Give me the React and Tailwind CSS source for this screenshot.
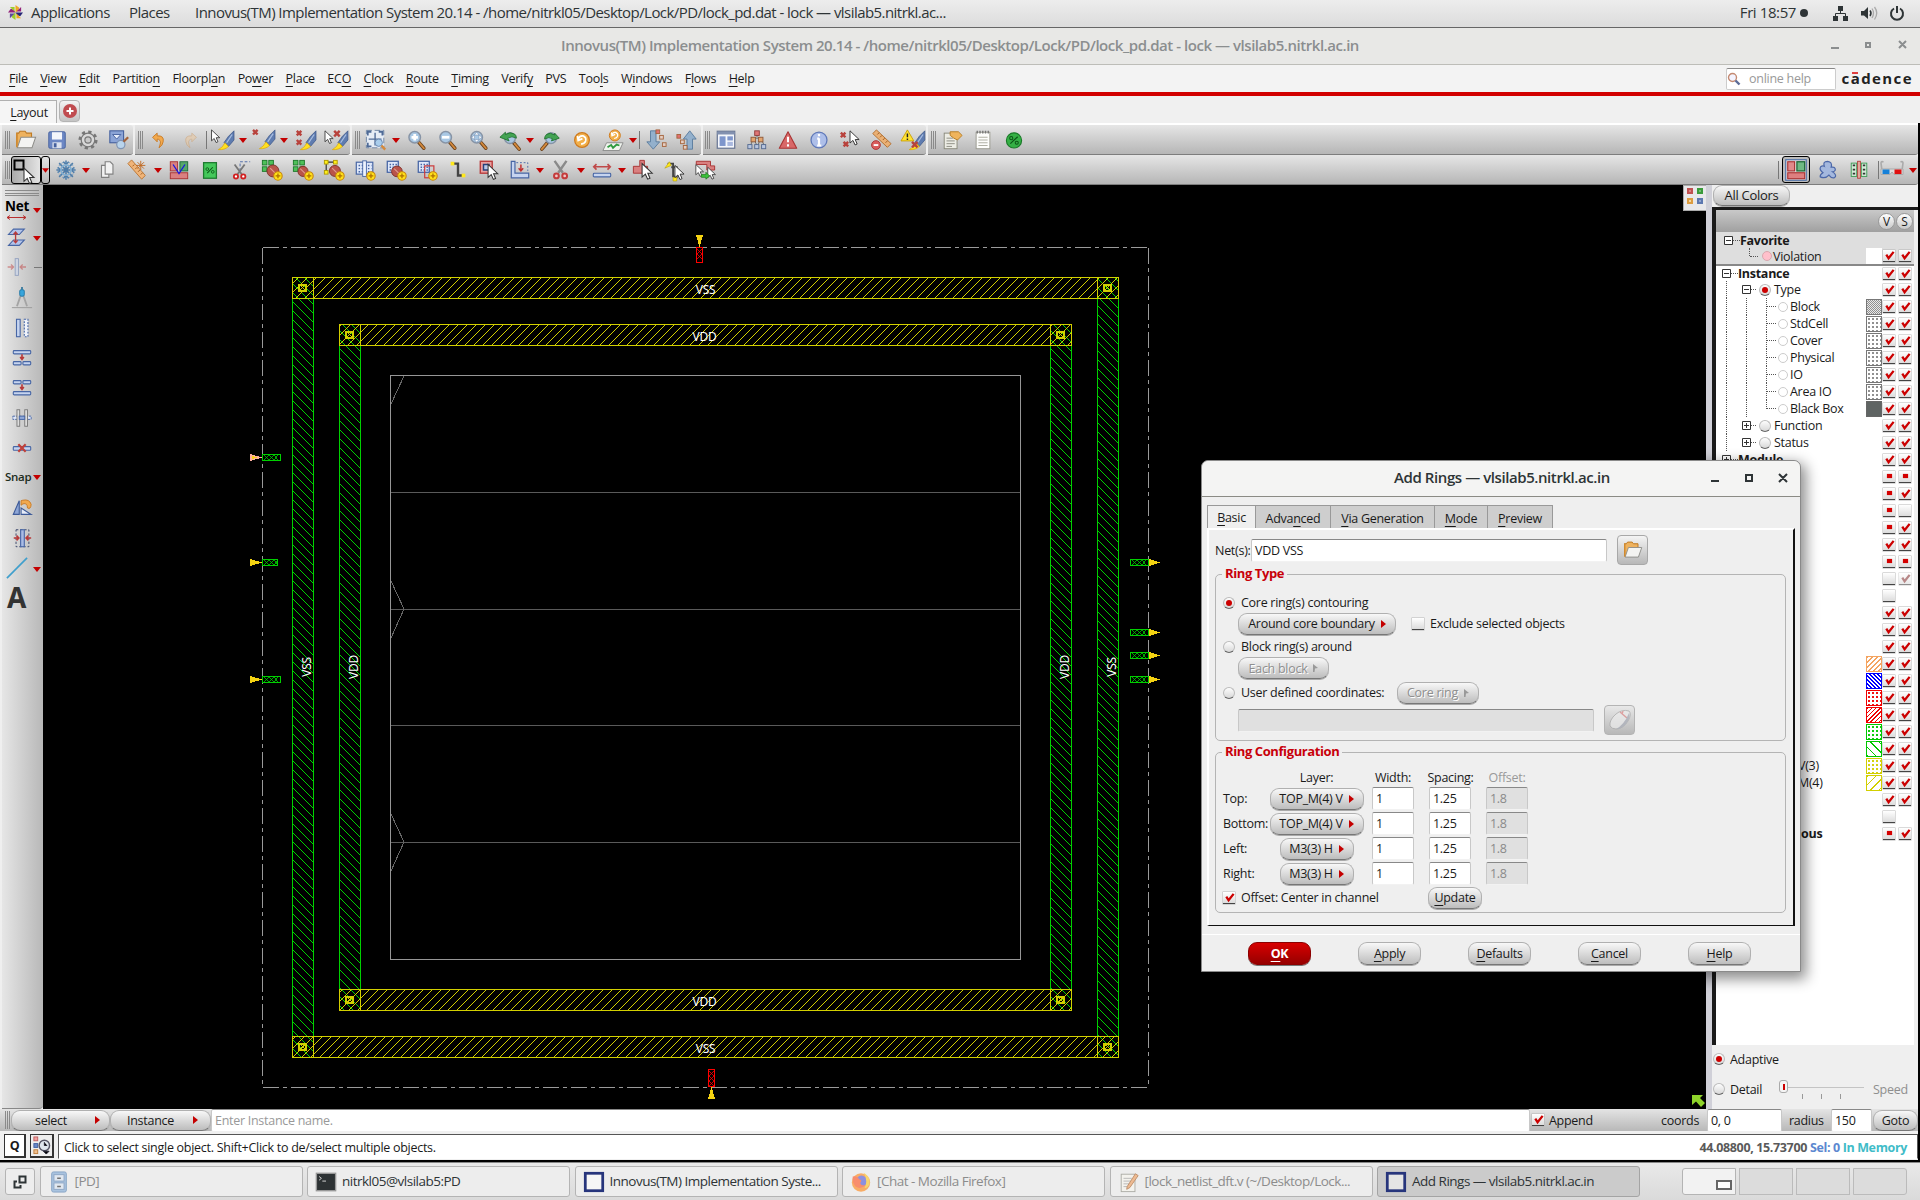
import React from "react";

/* ---------- small drawing parts ---------- */
const Cur = ({ x = 0, y = 0, s = 1 }) => (
  <path transform={`translate(${x} ${y}) scale(${s})`} d="M0 0V14L3.4 11L5.8 16.2L8.2 15.2L6 10H10.5Z" fill="#fff" stroke="#333" strokeWidth="1.1" />
);
const RX = ({ x = 0, y = 0, s = 6 }) => (
  <path d={`M${x} ${y}l${s} ${s}M${x + s} ${y}l${-s} ${s}`} stroke="#b8423c" strokeWidth="2.6" />
);
const Plus = ({ x = 17, y = 17 }) => (
  <g>
    <circle cx={x} cy={y} r="4.6" fill="#ffe11a" stroke="#c8860a" strokeWidth="1.2" />
    <path d={`M${x - 2.6} ${y}h5.2M${x} ${y - 2.6}v5.2`} stroke="#b07000" strokeWidth="1.4" />
  </g>
);
const Brush = ({ x = 0, y = 0 }) => (
  <g transform={`translate(${x} ${y})`}>
    <path d="M14 -1V9L8 16L3 12L8 5Z" fill="#5f7cb0" stroke="#3d5788" strokeWidth=".8" />
    <path d="M12 3L6 12" stroke="#a8bde0" strokeWidth="1.4" />
    <path d="M4 12L8 16Q4 20 -3 19.5Q2 17 4 12Z" fill="#ffe021" stroke="#d9a400" strokeWidth=".7" />
  </g>
);
const Lens = ({ children, x = 9.5, y = 9, r = 6.3 }) => (
  <g>
    <path d={`M${x + 4} ${y + 5}L${x + 10} ${y + 12}`} stroke="#6b431e" strokeWidth="3.8" strokeLinecap="round" />
    <path d={`M${x + 5} ${y + 6}L${x + 10} ${y + 12}`} stroke="#d58a3c" strokeWidth="2" strokeLinecap="round" />
    <circle cx={x} cy={y} r={r} fill="#a9c8e4" stroke="#8794a6" strokeWidth="1.6" />
    {children}
  </g>
);
const Ball = ({ x = 13, y = 13, r = 5.5 }) => (
  <g>
    <circle cx={x} cy={y} r={r} fill="#b9544a" stroke="#7e2f28" />
    <path d={`M${x - 3} ${y - 3}l6 6`} stroke="#e09a90" strokeWidth="1.2" />
  </g>
);
const Greens = () => (
  <g fill="#4fc05a" stroke="#1c7a2a">
    <rect x="1.5" y="1.5" width="5" height="5" /><rect x="8.5" y="1.5" width="5" height="5" />
    <rect x="1.5" y="8.5" width="5" height="5" /><rect x="8.5" y="8.5" width="5" height="5" />
  </g>
);
const BlueGrid = ({ w = 12, h = 12 }) => (
  <g>
    <rect x="2.5" y="2.5" width={w} height={h} fill="#dfe8fa" stroke="#4766a5" strokeWidth="1.4" />
    <path d={`M5 6h${w - 4}M5 9h${w - 4}M5 12h${w - 4}`} stroke="#4766a5" strokeWidth="1.6" strokeDasharray="1.6 1.6" />
  </g>
);
const Swirl = ({ x = 12, y = 12, s = 1 }) => (
  <g transform={`translate(${x} ${y}) scale(${s})`}>
    <circle r="8" fill="#f2b04a" stroke="#cf7a1c" strokeWidth="1.4" />
    <path d="M-4 -1Q-3 -5 1 -4.5Q5 -3 4 1Q3 4 -1 4.5M-5 -4.5L-4.2 .5L.5 -1.5" fill="none" stroke="#fff" strokeWidth="1.8" />
  </g>
);
const Folder = () => (
  <g>
    <path d="M2 19V4.5H4L5.5 2.5H11L12.5 4.5H18V9" fill="#eeb25e" stroke="#c07a22" strokeWidth="1.2" />
    <path d="M2.5 20.5L6.5 9H22.5L18.5 20.5Z" fill="#f4f4f2" stroke="#8c8c88" strokeWidth="1.1" />
    <path d="M2 4V20" stroke="#d08a30" strokeWidth="1.6" />
  </g>
);
const Persp = () => (
  <g>
    <rect x=".8" y=".8" width="22.4" height="22.4" fill="#e6dede" stroke="#4a6ea8" strokeWidth="1.2" />
    <rect x="3" y="3" width="7.5" height="10" fill="#e08a8a" stroke="#a83030" strokeWidth="1.2" />
    <rect x="13" y="3" width="8.5" height="10" fill="#6fb984" stroke="#1d6a38" strokeWidth="1.4" />
    <rect x="3" y="15" width="18.5" height="6.5" fill="#dd7f7f" stroke="#a83030" strokeWidth="1.2" />
  </g>
);

const icons = {
  folder: <Folder />,
  save: <g><rect x="3" y="3" width="18" height="18" rx="1.5" fill="#6c87c4" stroke="#45609e" /><rect x="6.5" y="3.5" width="11" height="8" fill="#f4f6fb" /><rect x="7" y="14.5" width="10" height="6.5" fill="#dbe1ee" /><rect x="8.5" y="15.5" width="3" height="4.5" fill="#45609e" /></g>,
  gear: <g><circle cx="12" cy="12" r="8.6" fill="none" stroke="#777" strokeWidth="3.6" strokeDasharray="3.4 3.35" /><circle cx="12" cy="12" r="7.4" fill="#d8d8d8" stroke="#777" strokeWidth="1.3" /><circle cx="12" cy="12" r="3.4" fill="#c9c9c9" stroke="#777" strokeWidth="1.3" /></g>,
  check: <g><rect x="2" y="2" width="15" height="13" fill="#8ba4d6" stroke="#45609e" strokeWidth="1.2" /><path d="M5 6h9l-4.5 5z" fill="#e7eefb" stroke="#45609e" /><circle cx="14" cy="17" r="4.5" fill="#b9d4ec" stroke="#7f94b4" strokeWidth="1.3" /><path d="M17 14L22 9" stroke="#a5633a" strokeWidth="2.4" /></g>,
  undo: <path d="M5 9L10 4.500V7.500Q18 7 16.500 14Q16 18 12 20.500Q14.500 14 13 12.500Q12 11 10 11V14Z" fill="#f1a94e" stroke="#c87a24" />,
  redo: <path opacity=".55" d="M19 9L14 4.500V7.500Q6 7 7.500 14Q8 18 12 20.500Q9.500 14 11 12.500Q12 11 14 11V14Z" fill="#ecc9a0" stroke="#cda070" />,
  brush: <g><Brush x="10" y="3" /><Cur x={-.5} y={1} s={.85} /></g>,
  brushx: <g><Brush x="10" y="2" /><RX x={0} y={1} s={5} /></g>,
  brushxx: <g><Brush x="10" y="3" /><RX x={3} y={2} s={5} /><RX x={3} y={12} s={5} /></g>,
  cursorx: <g><Brush x="11" y="3" /><Cur x={0} y={2} s={.85} /><RX x={10} y={2} s={6} /></g>,
  zoomfit: <g><rect x="1.500" y="1.500" width="19" height="19" fill="#e6edf6" stroke="#6e84a4" strokeDasharray="6 3" /><path d="M3 7V3H7M15 3H19V7M3 15V19H7" fill="none" stroke="#4e6a96" strokeWidth="2" /><path d="M11 4v14M4 11h14" stroke="#4e6a96" strokeWidth="1.500" /><circle cx="15" cy="15" r="4" fill="#a9cdec" stroke="#6888b0" /><path d="M18 18L22 22.500" stroke="#d58a3c" strokeWidth="2.600" /></g>,
  zoomin: <Lens><path d="M6 9H13M9.500 5.500V12.500" stroke="#fff" strokeWidth="3" /></Lens>,
  zoomout: <Lens><path d="M5.500 9H13.500" stroke="#fff" strokeWidth="3" /></Lens>,
  zoomall: <Lens><path d="M9.500 3.500L12 6.500H7ZM9.500 14.500L12 11.500H7ZM4 9L7 6.500V11.500ZM15 9L12 6.500V11.500Z" fill="#fff" stroke="#7890b0" strokeWidth=".6" /></Lens>,
  zoomprev: <g><Lens x={12} y={10} r={5.800} /><path d="M1 9L7 3.500V6Q12 2.500 17 5.500Q19 7 19 10Q14 7 9.500 10L11 13Z" fill="#43a352" stroke="#1d6e2c" strokeWidth=".9" /></g>,
  zoomnext: <g transform="scale(-1 1) translate(-24 0)"><Lens x={12} y={10} r={5.800} /><path d="M3 10L8 4.500V6.500Q13 3 17 6Q19 8 19 11Q14 8 10.500 10.500L11.500 13Z" fill="#43a352" stroke="#1d6e2c" strokeWidth=".9" /></g>,
  swirl: <Swirl />,
  swirldb: <g><Swirl x={14} y={7} s={.75} /><path d="M5 15H23L19 23.500H1Z" fill="#f0f4ee" stroke="#888" /><path d="M6 20L10 17.500L12 20.500L16 17L19 18" fill="none" stroke="#2f9a3f" strokeWidth="2" /></g>,
  down: <g><path d="M6 2H12V14H16L9 22L2 14H6Z" fill="#93b0cc" stroke="#5a7c9e" /><g fill="#e4cfc4" stroke="#a5643c"><rect x="12" y="1" width="4" height="4" fill="#e07070" /><rect x="16" y="7" width="4" height="4" /><rect x="19" y="15" width="4" height="4" /></g></g>,
  up: <g><path d="M12 22H18V11H22L15 2L8 11H12Z" fill="#93b0cc" stroke="#5a7c9e" /><g fill="#e4cfc4" stroke="#a5643c"><rect x="1" y="6" width="4" height="4" fill="#e07070" /><rect x="5" y="12" width="4" height="4" /><rect x="8" y="18" width="4" height="4" /></g></g>,
  layout: <g><rect x="2.500" y="2.500" width="19" height="18.500" fill="#f5f7fb" stroke="#6d7a96" strokeWidth="1.400" /><path d="M2.500 4.500h19" stroke="#8291b0" strokeWidth="3" /><rect x="5" y="8" width="6.500" height="10.500" fill="#7e96cc" /><rect x="13.500" y="8" width="6" height="4.500" fill="#7e96cc" /><rect x="13.500" y="14" width="6" height="4.500" fill="#a9b8de" /></g>,
  hier: <g strokeWidth="1"><path d="M12 5V9M5 18L8 10H16L20 18M8 10L12 18M16 10L13 18" stroke="#666" fill="none" /><rect x="9.500" y="2" width="5" height="5" fill="#df7676" stroke="#8f3a3a" /><rect x="5.500" y="9" width="5" height="5" fill="#e2a56f" stroke="#8f5a3a" /><rect x="13.500" y="9" width="5" height="5" fill="#e2a56f" stroke="#8f5a3a" /><g fill="#b8c6e0" stroke="#54698f"><rect x="2" y="17" width="4.500" height="4.500" /><rect x="9.500" y="17" width="4.500" height="4.500" /><rect x="17" y="17" width="4.500" height="4.500" /></g></g>,
  tri: <g><path d="M12 3L21.500 21H2.500Z" fill="#d86868" stroke="#a83434" strokeWidth="1.200" strokeLinejoin="round" /><path d="M12 8.500V14.500M12 16.500V19" stroke="#fff" strokeWidth="2.200" /></g>,
  info: <g><circle cx="12" cy="12" r="8.700" fill="#aebfe9" stroke="#5f78b8" strokeWidth="1.400" /><path d="M12 5.500V8M12 10V18M10 18H14.500M10 10.500H12" stroke="#fff" strokeWidth="2.400" /></g>,
  xxcur: <g><RX x={2} y={4} s={5} /><RX x={5} y={14} s={5} /><Cur x={12} y={2} s={.95} /></g>,
  rulerx: <g><path d="M3 5L7 1L23 16L19 20Z" fill="#eab074" stroke="#b06c2c" /><path d="M8 6l2-2M11 9l2-2M14 12l2-2M17 15l2-2" stroke="#9a5a20" /><circle cx="6.500" cy="17.500" r="4.800" fill="#d95c5c" stroke="#a83434" /><path d="M4 17.500H9" stroke="#fff" strokeWidth="2" /></g>,
  warn: <g><Brush x="12" y="3" /><path d="M7 1L14 13H0Z" fill="#ffe233" stroke="#caa000" /><path d="M7 5V9M7 10.300V12" stroke="#222" strokeWidth="1.600" /><RX x={12} y={14} s={6} /></g>,
  note: <g><rect x="3.500" y="4.500" width="14" height="17" fill="#ecece4" stroke="#88887a" /><path d="M6 10H13M6 13H15M6 16H15M6 19H12" stroke="#8a8a80" /><path d="M10 3H19L23 7L18 12L14 10L10 7Z" fill="#efb45c" stroke="#b57c22" /></g>,
  pad: <g><rect x="4.500" y="3.500" width="15" height="18" fill="#fdfdfb" stroke="#99998e" /><path d="M5 3.500H19" stroke="#777" strokeWidth="3" strokeDasharray="1.500 1.500" /><path d="M7 9H17M7 12H17M7 15H17M7 18H17" stroke="#a8a89c" /></g>,
  pct: <g><circle cx="12" cy="12.500" r="8.300" fill="#35b045" stroke="#1a7a28" strokeWidth="1.200" /><path d="M8 16L16 8.500" stroke="#0b5416" strokeWidth="1.300" /><circle cx="9" cy="10" r="1.700" fill="none" stroke="#0b5416" strokeWidth="1.100" /><circle cx="15" cy="15" r="1.700" fill="none" stroke="#0b5416" strokeWidth="1.100" /></g>,
  snow: <g stroke="#4d7ba8" strokeWidth="1.700" fill="none"><path d="M12 1.500V22.500M1.500 12H22.500M4.500 4.500L19.500 19.500M19.500 4.500L4.500 19.500" /><path d="M9 3L12 6L15 3M9 21L12 18L15 21M3 9L6 12L3 15M21 9L18 12L21 15" /><circle cx="12" cy="12" r="5.500" stroke="#83aed0" strokeWidth="2" /><circle cx="12" cy="12" r="8.800" stroke="#6e9ac0" strokeWidth="1" strokeDasharray="2 2" /></g>,
  copy: <g fill="#f2f2f2" stroke="#808080" strokeWidth="1.200"><path d="M6 7H14V20H6Z" /><path d="M10 3H15.500L18.500 6V16.500H10Z" /></g>,
  ruler: <g><path d="M1 5L5 1L20 18L16 22Z" fill="#f0b478" stroke="#b97432" /><path d="M6 8l2-2M9 11l2-2M12 14l2-2M15 17l2-2" stroke="#9a5a20" /><path d="M15 2V12M10 7H20M11.500 3.500L18.500 10.500M18.500 3.500L11.500 10.500" stroke="#c06820" strokeWidth="1" /></g>,
  vm: <g><rect x="2.500" y="3" width="8" height="10" fill="#d98080" stroke="#a83030" /><rect x="13" y="3" width="8.500" height="10" fill="#56a66b" stroke="#1d6a38" /><rect x="2.500" y="15" width="19" height="6.500" fill="#d98080" stroke="#a83030" /><path d="M5.500 6L12 16L18.500 6" fill="none" stroke="#1818e0" strokeWidth="1.400" /></g>,
  pct2: <g><rect x="5" y="4" width="14" height="17" fill="#44c85a" stroke="#1d7a2e" strokeWidth="1.400" /><path d="M9 15.500L15 9" stroke="#0b5416" strokeWidth="1.100" /><circle cx="9" cy="11" r="1.500" fill="none" stroke="#0b5416" strokeWidth=".9" /><circle cx="15" cy="14" r="1.500" fill="none" stroke="#0b5416" strokeWidth=".9" /></g>,
  cutsel: <g><path d="M11 13V3H22" fill="none" stroke="#4766a5" strokeDasharray="3 2" /><path d="M5 6L13 17M16 6L8 17" stroke="#777" strokeWidth="2" /><circle cx="6.500" cy="19" r="2.300" fill="#fff" stroke="#d02020" strokeWidth="2" /><circle cx="14.500" cy="19" r="2.300" fill="#fff" stroke="#d02020" strokeWidth="2" /></g>,
  g1: <g><Greens /><Ball x={13} y={13} r={6.500} /><Plus x={18.500} y={18.500} /></g>,
  g2: <g><Greens /><Ball x={12} y={13.500} r={5.500} /><Plus x={18.500} y={18.500} /></g>,
  g3: <g><path d="M3.500 3.500H13M3.500 3.500V14" stroke="#333" strokeWidth="1.300" /><g fill="#fff01a" stroke="#b09a00"><rect x="1.500" y="1.500" width="4" height="4" /><rect x="11.500" y="1.500" width="4" height="4" /><rect x="1.500" y="12.500" width="4" height="4" /></g><Ball x={13} y={13} r={6} /><Plus x={18.500} y={18.500} /></g>,
  g4: <g><rect x="2.500" y="3.500" width="18" height="13" fill="#dfe8fa" stroke="#4766a5" strokeWidth="1.300" /><path d="M5 7h14M5 10.500h14M5 14h14" stroke="#4766a5" strokeWidth="1.600" strokeDasharray="1.600 1.800" /><rect x="9.500" y="2" width="4" height="17" fill="#eef3fd" stroke="#4766a5" /><Plus x={18.500} y={18.500} /></g>,
  g5: <g><BlueGrid /><Ball x={13} y={13.500} r={5.800} /><Plus x={18.500} y={18.500} /></g>,
  g6: <g><BlueGrid /><rect x="9.500" y="7.500" width="10" height="13" fill="none" stroke="#cc3a3a" strokeWidth="1.300" /><Plus x={18.500} y={18.500} /></g>,
  path: <g><path d="M5 5H12V18H18" fill="none" stroke="#444" strokeWidth="2.600" /><rect x="4" y="3" width="4" height="4" fill="#ffe81a" /><rect x="16" y="16" width="4" height="4" fill="#ffe81a" /></g>,
  selcur: <g><rect x="2.500" y="2.500" width="13" height="13" fill="#e9a0a0" stroke="#b83a3a" strokeWidth="1.500" /><rect x="6" y="6" width="6" height="6" fill="#b9c9ea" stroke="#27407c" strokeWidth="1.600" /><Cur x={11} y={6} s={1} /></g>,
  bound: <g><path d="M2.500 2.500H6.500V15.500H21.500V20.500H2.500Z" fill="#c6d4ef" stroke="#4766a5" strokeWidth="1.300" /><path d="M8 4H20.500V13" fill="none" stroke="#4766a5" strokeDasharray="2 2" /><path d="M13 6V12M10.500 10L13 13L15.500 10" stroke="#c03030" strokeWidth="1.600" fill="none" /></g>,
  cut: <g><path d="M5 2L14 15M18 2L9 15" stroke="#8a8a8a" strokeWidth="2.600" /><circle cx="7" cy="18.500" r="2.600" fill="#f0c8c8" stroke="#c43c3c" strokeWidth="2.200" /><circle cx="16" cy="18.500" r="2.600" fill="#f0c8c8" stroke="#c43c3c" strokeWidth="2.200" /></g>,
  resize: <g><path d="M3 8.500H21M6 5.500L3 8.500L6 11.500M18 5.500L21 8.500L18 11.500" fill="none" stroke="#c04a4a" strokeWidth="1.800" /><rect x="2.500" y="15.500" width="19" height="4" rx="1" fill="#c6d4ef" stroke="#4766a5" strokeWidth="1.200" /></g>,
  redcur: <g><path d="M8.500 1.500H13.500V8H17V15.500H1.500V8H8.500Z" fill="#d98080" stroke="#a83030" /><Cur x={11} y={5} s={1.050} /></g>,
  pathcur: <g><path d="M5 5H11V19H16M9 9H15V21" fill="none" stroke="#444" strokeWidth="2" /><path d="M2 10L7 3L9 7ZM11 20h4v4h-4z" fill="#ffe81a" stroke="#b09a00" strokeWidth=".6" /><Cur x={13} y={7} s={.95} /></g>,
  multicur: <g><path d="M2.500 2.500H18V7.500H22.500V12H14V6H2.500Z" fill="#d98080" stroke="#a83030" /><Cur x={2} y={6} s={.8} /><Cur x={15} y={9} s={.8} /><path d="M8 17H13V14.500L17 18.500L13 22V20H8Z" fill="#3cc43c" stroke="#1c7a1c" strokeWidth=".8" /></g>,
  persp: <Persp />,
  blob: <path d="M8 8Q6 2.500 11.500 2.500Q17 3 15.500 9Q20 8 20 12Q19 14 17 14Q22.500 18 19 20.500Q16 21.500 13 17.500Q9 22 3.500 19.500Q3 17 6.500 15Q2 11.500 4 8.500Q6 7 8 8Z" fill="#a4b8de" stroke="#4b67a8" strokeWidth="1.300" />,
  cells: <g><rect x="3.500" y="4.500" width="6" height="14.500" fill="#d4ecd8" stroke="#3c9a54" /><rect x="14.500" y="4.500" width="6" height="14.500" fill="#d4ecd8" stroke="#3c9a54" /><path d="M6.500 6V18M17.500 6V18" stroke="#333" strokeWidth="2.600" strokeDasharray="2 2.500" /><rect x="10.500" y="2.500" width="3" height="18.500" fill="#eab0a8" stroke="#b04038" /></g>,
  glasses: <g><path d="M2 13L1 5Q1 3 3.500 4M22 13L23 5Q23 3 20.500 4" fill="none" stroke="#aaa" strokeWidth="1.600" /><path d="M1 11H23V16.500H14L12 14L10 16.500H1Z" fill="#ddd" stroke="#aaa" /><rect x="2.500" y="11.500" width="7" height="4.500" fill="#1580d8" /><rect x="14.500" y="11.500" width="7" height="4.500" fill="#e01010" /></g>,
  layers: <g><path d="M9 2.500H22L16 9H3Z" fill="#b4c4ea" stroke="#4766a5" strokeWidth="1.300" /><path d="M9 15.500H22L16 22H3Z" fill="#b4c4ea" stroke="#4766a5" strokeWidth="1.300" /><path d="M11.500 6V19M9 9L11.500 6L14 9M9 16L11.500 19L14 16" fill="none" stroke="#b83a3a" strokeWidth="1.600" /></g>,
  squeeze: <g opacity=".5"><rect x="11" y="2" width="4" height="20" fill="#c6d4ef" stroke="#4766a5" /><path d="M2 12H9M24 12H17M6 9L9 12L6 15M20 9L17 12L20 15" fill="none" stroke="#c04040" strokeWidth="1.600" /></g>,
  compass: <g><path d="M11 8L6.500 21M13 8L17.500 21" stroke="#a4a4a4" strokeWidth="2" /><path d="M1 22.500H23" stroke="#999" /><path d="M12 0V3" stroke="#3c7a9c" strokeWidth="2" /><rect x="9.500" y="3" width="5" height="7" rx="1.500" fill="#37a5dc" stroke="#2377a4" /></g>,
  bars: <g><rect x="6" y="2.500" width="4" height="19" fill="#c6d4ef" stroke="#4766a5" strokeWidth="1.200" /><rect x="14.500" y="2.500" width="4" height="19" fill="#f0f4fc" stroke="#4766a5" strokeWidth="1.200" strokeDasharray="2 1.500" /></g>,
  split: <g fill="#c6d4ef" stroke="#4766a5" strokeWidth="1.200"><rect x="2.500" y="4" width="19" height="3.500" rx="1" /><rect x="2.500" y="16" width="8.500" height="3.500" rx="1" /><rect x="13" y="16" width="8.500" height="3.500" rx="1" /><path d="M12 8V12.500M10 11L12 13.500L14 11" stroke="#b83a3a" fill="none" strokeWidth="1.800" /></g>,
  merge: <g fill="#c6d4ef" stroke="#4766a5" strokeWidth="1.200"><rect x="2.500" y="16" width="19" height="3.500" rx="1" /><rect x="2.500" y="4" width="8.500" height="3.500" rx="1" /><rect x="13" y="4" width="8.500" height="3.500" rx="1" /><path d="M12 8V12.500M10 11L12 13.500L14 11" stroke="#b83a3a" fill="none" strokeWidth="1.800" /></g>,
  cross: <g><rect x="2" y="10" width="20" height="3.500" fill="#dfe8fa" stroke="#4766a5" strokeDasharray="2.500 1" /><rect x="6.500" y="3" width="3" height="18" fill="#ddd" stroke="#777" /><rect x="15" y="3" width="3" height="18" fill="#ddd" stroke="#777" /><rect x="9" y="10" width="6" height="3.500" fill="#8fa8d8" stroke="#4766a5" /></g>,
  barx: <g><rect x="2.500" y="10.500" width="19" height="4" rx="1" fill="#c6d4ef" stroke="#4766a5" strokeWidth="1.200" /><path d="M8 8L16 16M16 8L8 16" stroke="#c0413a" strokeWidth="2.400" /></g>,
  rot: <g><path d="M9 4V19H2.500Z" fill="#8ea6d6" stroke="#3d5a98" strokeWidth="1.200" /><path d="M11 12V19H22Z" fill="#e6ecf8" stroke="#3d5a98" strokeWidth="1.200" /><path d="M11 4V9L13 7.500Q18 6 18 12Q21.500 14 22 8Q20 2 13 3.500Z" fill="#f1a94e" stroke="#c87a24" /></g>,
  shrink: <g><rect x="5.500" y="3" width="14" height="18.500" fill="none" stroke="#333f66" strokeDasharray="2.500 2" /><rect x="10.500" y="3" width="4" height="18.500" fill="#a9bbe4" stroke="#4766a5" strokeWidth="1.200" /><path d="M3 12H8M22 12H17M6 9.500L8.500 12L6 14.500M19 9.500L16.500 12L19 14.500" fill="none" stroke="#b83a3a" strokeWidth="1.800" /></g>,
  line: <path d="M1 23L23 1" stroke="#3f9fcc" strokeWidth="1.800" />,
  mouse: <g opacity=".7"><path d="M2 18Q1 12 8 6Q14 1 21 3Q24 6 20 13Q15 21 8 21Q4 21 2 18Z" fill="#ececec" stroke="#aaa" /><path d="M12 4L19 10M15 3L14 6" stroke="#d88" strokeWidth="1.400" /><path d="M21 5Q23 9 18 16Q14 21 8 21Q16 17 21 5Z" fill="#a9adb8" /></g>,
};

const Icon = ({ n, c = "h-[22px] w-[22px]" }) => (
  <svg viewBox="0 0 24 24" className={"shrink-0 overflow-visible " + c}>{icons[n]}</svg>
);
const Arr = ({ c = "w-[10px]" }) => (
  <div className={"flex h-full shrink-0 items-center justify-center " + c}>
    <svg viewBox="0 0 8 5" className="mt-[2px] h-[5px] w-[8px]"><path d="M0 0H8L4 5Z" fill="#c40000" /></svg>
  </div>
);
const Sep = () => <div className="mx-[0.5px] h-[18px] w-px shrink-0 bg-[#777]" />;
const Grip = () => (
  <div className="-mr-[5px] flex h-[18px] shrink-0 gap-px">
    <i className="w-px bg-[#8a8a8a]" /><i className="w-px bg-[#8a8a8a]" /><i className="w-px bg-[#8a8a8a]" /><i className="w-[4px]" />
  </div>
);
const Tools = ({ list }) => list.map((n, i) =>
  n === "v" ? <Arr key={i} /> : n === "|" ? <Sep key={i} /> : (
    <div key={i} className="flex w-[31px] shrink-0 items-center justify-center"><Icon n={n} /></div>
  ));
const seg = "flex h-full shrink-0 items-center rounded-r-[3px] border-b border-[#7d7d7d] bg-linear-to-b from-[#e6e6e6] to-[#b6b6b6]";

/* Text with an underlined mnemonic, marked with "_" before the letter */
const M = ({ t }) => {
  const i = t.indexOf("_");
  if (i < 0) return t;
  return <>{t.slice(0, i)}<span className="underline decoration-1 underline-offset-[3px]">{t[i + 1]}</span>{t.slice(i + 2)}</>;
};

/* ---------- form parts ---------- */
const Check = ({ s = "c" }) => (
  <span className={"flex h-[12px] w-[12px] shrink-0 items-center justify-center border-b border-[#444] bg-linear-to-b from-white to-[#dcdcdc] shadow-[0_0_0_0.5px_#b5b5b5] " + (s === "d" ? "opacity-60" : "")}>
    {(s === "c" || s === "d") && <svg viewBox="0 0 12 12" className="h-[11px] w-[11px] overflow-visible"><path d="M2.500 5L5 9L10.500 2" fill="none" stroke={s === "d" ? "#8a3a3a" : "#cc0000"} strokeWidth="2.500" /></svg>}
    {s === "p" && <i className="h-[4px] w-[5px] bg-[#d40000] shadow-[0_0_1px_#d40000]" />}
  </span>
);
const Radio = ({ on, c = "h-[12px] w-[12px]" }) => (
  <span className={"flex shrink-0 items-center justify-center rounded-full border border-[#bbb] border-b-[#666] bg-linear-to-b from-[#fdfdfd] to-[#d8d8d8] " + c}>
    {on && <i className="h-[6px] w-[6px] rounded-full bg-[#cc0000]" />}
  </span>
);
const pill = "flex shrink-0 items-center justify-center rounded-[9px] border border-[#b0b0b0] border-b-[#777] bg-linear-to-b from-[#f8f8f8] to-[#bdbdbd] shadow-[0_1px_0_#aaa] ";
const Pop = ({ t, c, dis }) => (
  <button className={pill + "h-[22px] gap-[6px] " + c + (dis ? " from-[#e8e8e8] text-[#8f8f8f] [text-shadow:1px_1px_0_#fff]" : "")}>
    <span>{t}</span>
    <svg viewBox="0 0 5 8" className="h-[8px] w-[5px]"><path d={dis ? "M0 0L5 4L2 4.500L1.500 8H0Z" : "M0 0L5 4L0 8Z"} fill={dis ? "#999" : "#c40000"} /></svg>
  </button>
);
const Field = ({ t, c, dis }) => (
  <div className={"flex h-[23px] shrink-0 items-center rounded-[2px] border border-x-[#c8c8c8] border-t-[#888] border-b-[#f2f2f2] pl-[3px] " + (dis ? "bg-[#e0e0e0] text-[#8a8a8a] " : "bg-white ") + c}>{t}</div>
);

/* ---------- layout view ---------- */
const OY = "#d2cf00", OG = "#00d000";
const N9 = [0, 1, 2, 3, 4, 5, 6, 7, 8];
const HBar = ({ x, y, w, label, lx }) => (
  <g>
    <rect x={x} y={y} width={w} height="21" fill="url(#hy)" stroke={OY} />
    <text x={lx} y={y + 16} fill="#fff" fontSize="12" textAnchor="middle">{label}</text>
  </g>
);
const VBar = ({ x, y, h, label }) => (
  <g>
    <rect x={x} y={y} width="21" height={h} fill="url(#hg)" stroke={OG} />
    <text transform={`translate(${x + 18} 667) rotate(-90)`} fill="#fff" fontSize="12" textAnchor="middle">{label}</text>
  </g>
);
const Via = ({ x, y }) => (
  <g>
    <rect x={x} y={y} width="21" height="21" fill="url(#hg)" stroke={OY} />
    <rect x={x} y={y} width="21" height="21" fill="url(#hy)" stroke={OY} />
    <rect x={x + 6.500} y={y + 7} width="7" height="6" fill="none" stroke={OY} strokeWidth="2" />
    <path d={`M${x + 7} ${y + 7}l6 6m0 -6l-6 6`} stroke={OY} strokeWidth="1" />
  </g>
);
const PinH = ({ x, y, w, right, pink }) => (
  <g>
    <rect x={x + .5} y={y - 2.500} width={w} height="6" fill="none" stroke={OG} />
    <path d={`M${x + 2} ${y - 2}l5 5l5 -5l4 5M${x + 2} ${y + 3}l5 -5l5 5l4 -5`} fill="none" stroke={OG} strokeWidth=".8" />
    {right ? <path d={`M${x + 19} ${y - 3}v7l11 -3.500z`} fill="#f5d312" /> : <path d={`M${x - 12} ${y - 3}v7l12 -3.500z`} fill={pink ? "#ffb0a0" : "#f5d312"} />}
    {pink && <path d={`M${x - 10} ${y - 1}v3l5 -1.500z`} fill="#f5d312" />}
  </g>
);
const Layout = () => (
  <svg viewBox="43 185 1663 924" className="h-[924px] w-[1663px] shrink-0 bg-black font-['Noto_Sans',sans-serif]" shapeRendering="crispEdges">
    <defs>
      <pattern id="hy" width="9" height="9" patternUnits="userSpaceOnUse">{N9.map((i) => <rect key={i} x={i} y={8 - i} width="1" height="1" fill={OY} />)}</pattern>
      <pattern id="hg" width="9" height="9" patternUnits="userSpaceOnUse">{N9.map((i) => <rect key={i} x={i} y={i} width="1" height="1" fill={OG} />)}</pattern>
    </defs>
    <path d="M262.500 247.500H1148.500M262.500 1087.500H1148.500M262.500 247.500V1087.500M1148.500 247.500V1087.500" stroke="#9a9a9a" strokeDasharray="16 4 4 4" />
    <VBar x={292.500} y={277.500} h={780} label="VSS" /><VBar x={1097.500} y={277.500} h={780} label="VSS" />
    <VBar x={339.500} y={324.500} h={686} label="VDD" /><VBar x={1050.500} y={324.500} h={686} label="VDD" />
    <HBar x={313.500} y={277.500} w={784} label="VSS" lx={705.500} /><HBar x={313.500} y={1036.500} w={784} label="VSS" lx={705.500} />
    <HBar x={360.500} y={324.500} w={690} label="VDD" lx={704.500} /><HBar x={360.500} y={989.500} w={690} label="VDD" lx={704.500} />
    {[[292.5, 277.5], [1097.5, 277.5], [292.5, 1036.5], [1097.5, 1036.5], [339.5, 324.5], [1050.5, 324.5], [339.5, 989.5], [1050.5, 989.5]].map(([x, y]) => (
      <g key={x + "," + y}><rect x={x} y={y} width="21" height="21" fill="#000" /><Via x={x} y={y} /></g>
    ))}
    <rect x="390.500" y="375.500" width="630" height="584" fill="none" stroke="#969696" />
    <path d="M391 492.500H1020M391 609.500H1020M391 725.500H1020M391 842.500H1020" stroke="#5a5a5a" />
    <path d="M404 376L391 404M391 581L404 609L391 638M391 814L404 842L391 871" fill="none" stroke="#666" />
    <PinH x={262} y={457} w={18} pink /><PinH x={262} y={562} w={15} /><PinH x={262} y={679} w={18} />
    {[562, 632, 655, 679].map((y) => <PinH key={y} x={1130} y={y} w={18} right />)}
    <rect x="696.500" y="247.500" width="6" height="15" fill="none" stroke="#f00" /><path d="M697 249l5 5l-5 5M702 249l-5 5l5 5" fill="none" stroke="#f00" strokeWidth=".8" />
    <path d="M696 235h7l-3.500 12z" fill="#f5d312" />
    <rect x="708.500" y="1069.500" width="6" height="17" fill="none" stroke="#f00" /><path d="M709 1071l5 5l-5 5l5 5M714 1071l-5 5l5 5l-5 5" fill="none" stroke="#f00" strokeWidth=".8" />
    <path d="M708 1099h7l-3.500 -12z" fill="#f5d312" />
    <rect x="1683" y="185" width="23" height="25" fill="#e8e8ea" stroke="#aaa" />
    <g strokeWidth="2"><rect x="1688" y="189" width="4" height="4" fill="#d88080" stroke="#c05050" /><rect x="1698" y="189" width="4" height="4" fill="#70c070" stroke="#3a9a3a" /><rect x="1688" y="199" width="4" height="4" fill="#f4d8a0" stroke="#dc9c40" /><rect x="1698" y="199" width="4" height="4" fill="#90a4d0" stroke="#5c78b0" /></g>
    <path shapeRendering="auto" d="M1692 1095H1703L1700 1098L1705 1103L1701 1107L1696 1101.500L1692 1105Z" fill="#8fd42a" />
  </svg>
);

/* ---------- colour tree ---------- */
const swatch = {
  blk: "border-[#777] bg-[repeating-conic-gradient(#8f8f8f_0_25%,#e8e8e8_0_50%)] bg-[length:2px_2px]",
  dot: "border-[#777] bg-[radial-gradient(#888_0.7px,transparent_0.8px)] bg-[length:4px_4px] bg-white",
  box: "border-[#666] bg-[#5f6463]",
  o: "border-[#f4a460] bg-[repeating-linear-gradient(135deg,#f4a460_0_1px,white_1px_3.500px)]",
  b: "border-[#0000ff] bg-[repeating-linear-gradient(45deg,#0000ff_0_1px,white_1px_2.800px)]",
  rd: "border-[#f00000] bg-[radial-gradient(#f00000_0.7px,transparent_0.8px)] bg-[length:4px_4px] bg-white",
  r: "border-[#f00000] bg-[repeating-linear-gradient(135deg,#f00000_0_1px,white_1px_3px)]",
  gd: "border-[#00c800] bg-[radial-gradient(#00c800_0.7px,transparent_0.8px)] bg-[length:4px_4px] bg-white",
  g: "border-[#00c800] bg-[repeating-linear-gradient(45deg,#00c800_0_1px,white_1px_6px)]",
  yd: "border-[#d2cf00] bg-[radial-gradient(#d2cf00_0.7px,transparent_0.8px)] bg-[length:4px_4px] bg-white",
  y: "border-[#d2cf00] bg-[repeating-linear-gradient(135deg,#d2cf00_0_1px,white_1px_6px)]",
};
const Sw = ({ k }) => <span className={"h-[16px] w-[16px] shrink-0 " + (k === "w" ? "bg-white" : k ? "border " + swatch[k] : "")} />;
const Exp = ({ p }) => (
  <svg viewBox="0 0 9 9" className="h-[9px] w-[9px] shrink-0"><path d={"M.5 .5H8.500V8.500H.5ZM2 4.500H7" + (p ? "M4.500 2V7" : "")} fill="#fff" stroke="#333" /></svg>
);
const Dots = ({ c }) => <i className={"shrink-0 border-t border-dotted border-[#555] " + c} />;
const Row = ({ children, sw, a, b, c = "h-[17px]" }) => (
  <div className={"flex shrink-0 items-center pr-[3px] pl-px " + c}>
    <div className="flex min-w-0 flex-1 items-center self-stretch whitespace-nowrap">{children}</div>
    <Sw k={sw} />
    <span className="ml-[1px] w-[12px]">{a && <Check s={a} />}</span>
    <span className="ml-[4px] w-[12px]">{b && <Check s={b} />}</span>
  </div>
);
const vline = "self-stretch border-l border-dotted border-[#555]";
const Tree = () => (
  <div className="flex min-h-0 flex-1 flex-col bg-white">
    <Row a="c" b="c" c="h-[15px] font-bold leading-[14px]"><span className="ml-[5px]" /><Exp /><Dots c="w-[7px]" />Instance</Row>
    <Row a="c" b="c"><i className={"ml-[9px] " + vline} /><span className="w-[15px]" /><Exp /><Dots c="mr-[3px] w-[5px]" /><Radio on /><span className="ml-[3px]">Type</span></Row>
    {[["Block", "blk"], ["StdCell", "dot"], ["Cover", "dot"], ["Physical", "dot"], ["IO", "dot"], ["Area IO", "dot"], ["Black Box", "box"]].map(([t, s]) => (
      <Row key={t} sw={s} a="c" b="c">
        <i className={"ml-[9px] " + vline} /><i className={"ml-[19px] " + vline} /><i className={"ml-[19px] " + (t === "Black Box" ? "mb-[8px] " : "") + vline} />
        <Dots c="mr-[2px] w-[9px]" /><i className="h-[10px] w-[10px] rounded-full border border-[#ccc]" /><span className="ml-[2px]">{t}</span>
      </Row>
    ))}
    {["Function", "Status"].map((t) => (
      <Row key={t} a="c" b="c"><i className={"ml-[9px] " + vline} /><span className="w-[15px]" /><Exp p /><Dots c="mr-[3px] w-[5px]" /><Radio /><span className="ml-[3px]">{t}</span></Row>
    ))}
    <Row a="c" b="c" c="h-[17px] font-bold"><span className="ml-[5px]" /><Exp p /><Dots c="w-[7px]" />Module</Row>
    {[["p", "p"], ["p", "c"], ["p", "e"], ["p", "c"], ["c", "c"], ["p", "p"], ["e", "d"], ["e", ""], ["c", "c"], ["c", "c"], ["c", "c"],
      ["c", "c", "o"], ["c", "c", "b"], ["c", "c", "rd"], ["c", "c", "r"], ["c", "c", "gd"], ["c", "c", "g"],
      ["c", "c", "yd", "V(3)"], ["c", "c", "y", "M(4)"], ["c", "c"], ["e", ""]].map(([a, b, s, t], i) => (
      <Row key={i} a={a} b={b} sw={s}>{t && <span className="ml-[81px]">{t}</span>}</Row>
    ))}
    <Row a="p" b="c" c="h-[17px] font-bold"><span className="ml-[84px]">ous</span></Row>
  </div>
);
const RoundBtn = ({ t }) => <span className="flex h-[17px] w-[17px] items-center justify-center rounded-full border border-[#999] bg-linear-to-b from-white to-[#c8c8c8] text-[12px]">{t}</span>;
const RightPanel = () => (
  <div className="flex w-[206px] shrink-0 flex-col bg-[#efefef]">
    <div className="h-[21px]"><button className={pill + "ml-px h-[21px] w-[77px] text-[13px]"}>All Colors</button></div>
    <div className="mt-px flex h-[838px] flex-col border-t-[3px] border-l-[4px] border-[#1a1a1a] pr-[4px]">
      <div className="flex h-[22px] shrink-0 items-center justify-end gap-[1px] bg-linear-to-b from-[#c9c9c9] to-[#a0a0a0] pr-px"><RoundBtn t="V" /><RoundBtn t="S" /></div>
      <div className="flex h-[34px] shrink-0 flex-col border-b-2 border-[#888] bg-[#dedede]">
        <Row c="h-[16px] font-bold"><span className="ml-[7px]" /><Exp /><Dots c="w-[7px]" />Favorite</Row>
        <Row sw="w" a="c" b="c" c="h-[16px]"><i className={"mb-[8px] ml-[32px] " + vline} /><Dots c="mr-[4px] w-[8px]" /><i className="h-[10px] w-[10px] rounded-full border border-[#d8a8ae] bg-[#ffc0cb]" /><span className="ml-px">Violation</span></Row>
      </div>
      <Tree />
    </div>
    <div className="mt-[6px] flex h-[16px] items-center pl-px"><Radio on /><span className="ml-[5px]">Adaptive</span></div>
    <div className="mt-[12px] flex h-[20px] items-center pl-px">
      <Radio /><span className="ml-[5px] w-[46px]">Detail</span>
      <div className="relative h-[20px] w-[90px]">
        <i className="absolute top-[8px] left-[8px] w-[80px] border-t border-[#c4c4c4]" />
        <span className="absolute top-[1px] left-[3px] flex h-[13px] w-[9px] items-center justify-center rounded-[3px] border border-[#aaa] bg-[#f4f4f4]"><i className="h-[6px] w-[2px] bg-[#c00]" /></span>
        <i className="absolute top-[15px] left-[26px] h-[5px] w-px bg-[#999]" /><i className="absolute top-[15px] left-[45px] h-[5px] w-px bg-[#999]" /><i className="absolute top-[15px] left-[64px] h-[5px] w-px bg-[#999]" />
      </div>
      <span className="ml-[7px] text-[#8e8e8e]">Speed</span>
    </div>
  </div>
);

/* ---------- dialog ---------- */
const Group = ({ title, c, children }) => (
  <fieldset className={"relative ml-[6px] w-[571px] rounded-[5px] border border-[#b4b4b4] " + c}>
    <span className="absolute -top-[10px] left-[6px] bg-[#efefef] px-[3px] text-[13px] font-bold tracking-[-0.4px] text-[#c8000a]">{title}</span>
    {children}
  </fieldset>
);
const CfgRow = ({ l, t, w }) => (
  <div className="flex h-[25px] items-center pl-[7px]">
    <span className="w-[46px] whitespace-nowrap">{l}</span>
    <div className="flex w-[95px] justify-center"><Pop t={t} c={w} /></div>
    <Field t="1" c="ml-[8px] w-[42px]" /><Field t="1.25" c="ml-[15px] w-[42px]" /><Field t="1.8" dis c="ml-[15px] w-[42px]" />
  </div>
);
const Dialog = () => (
  <div className="absolute top-[460px] left-[1201px] flex h-[512px] w-[600px] flex-col rounded-t-[7px] border border-[#8a8a8a] bg-[#efefef] shadow-[3px_5px_14px_2px_rgba(0,0,0,0.45)]">
    <div className="flex h-[36px] shrink-0 items-center rounded-t-[7px] border-b border-[#8b8b85] bg-[#f4f4f3] pb-[2px] text-[#2e3436]">
      <span className="w-[48px]" />
      <span className="ml-[45px] flex-1 text-center text-[15px] font-semibold tracking-[-0.42px]">Add Rings — vlsilab5.nitrkl.ac.in</span>
      <svg viewBox="0 0 80 12" className="mr-[10px] ml-[1px] h-[12px] w-[80px]"><g fill="none" stroke="#2e3436" strokeWidth="2"><path d="M1 9H9M36 3H42V9H36ZM69 2L77 10M77 2L69 10" /></g></svg>
    </div>
    <div className="mt-[8px] ml-[5px] flex h-[23px] shrink-0 items-end">
      {[["_Basic", "w-[49px]"], ["Adva_nced", "w-[75px]"], ["_Via Generation", "w-[104px]"], ["_Mode", "w-[53px]"], ["_Preview", "w-[65px]"]].map(([t, w], i) => (
        <div key={t} className={"flex h-full items-center justify-center border-t border-r border-[#999] " + w + (i ? " bg-[#cecece] pt-[3px]" : " border-l bg-[#efefef] pt-px")}><span><M t={t} /></span></div>
      ))}
    </div>
    <div className="ml-[5px] h-[398px] w-[588px] shrink-0 border-t-2 border-r-2 border-b border-l-2 border-t-white border-r-[#111] border-b-[#111] border-l-white">
      <div className="mt-[5px] ml-[6px] flex h-[30px] items-center">
        <span className="w-[36px]">Net(s):</span><Field t="VDD VSS" c="w-[356px]" />
        <button className="ml-[10px] flex h-[30px] w-[31px] items-center justify-center rounded-[4px] border border-[#a8a8a8] bg-linear-to-b from-[#f4f4f4] to-[#b8b8b8]"><Icon n="folder" c="h-[20px] w-[20px]" /></button>
      </div>
      <Group title="Ring Type" c="mt-[9px] h-[167px]">
        <div className="mt-[19px] flex h-[17px] items-center pl-[7px]"><Radio on /><span className="ml-[6px]">Core ring(s) contouring</span></div>
        <div className="mt-[1px] flex h-[23px] items-center pl-[22px]"><Pop t="Around core boundary" c="w-[158px]" /><span className="w-[16px]" /><Check s="e" /><span className="ml-[6px]">Exclude selected objects</span></div>
        <div className="mt-[3px] flex h-[17px] items-center pl-[7px]"><Radio /><span className="ml-[6px]">Block ring(s) around</span></div>
        <div className="mt-[2px] flex h-[23px] pl-[22px]"><Pop t="Each block" dis c="w-[91px]" /></div>
        <div className="mt-px flex h-[23px] items-center pl-[7px]"><Radio /><span className="ml-[6px] w-[156px]">User defined coordinates:</span><Pop t="Core ring" dis c="w-[82px]" /></div>
        <div className="mt-px flex h-[30px] items-center pl-[22px]"><Field dis c="w-[356px]" /><button className="ml-[10px] flex h-[30px] w-[31px] items-center justify-center rounded-[4px] border border-[#b4b4b4] bg-linear-to-b from-[#e8e8e8] to-[#b8b8b8]"><Icon n="mouse" c="h-[24px] w-[24px]" /></button></div>
      </Group>
      <Group title="Ring Configuration" c="mt-[11px] h-[161px]">
        <div className="mt-[16px] flex h-[17px] items-center">
          <span className="ml-[53px] w-[95px] text-center">Layer:</span><span className="ml-px w-[56px] text-center">Width:</span><span className="w-[59px] text-center">Spacing:</span><span className="w-[54px] text-center text-[#999]">Offset:</span>
        </div>
        <CfgRow l="Top:" t="TOP_M(4) V" w="w-[94px]" /><CfgRow l="Bottom:" t="TOP_M(4) V" w="w-[94px]" /><CfgRow l="Left:" t="M3(3) H" w="w-[74px]" /><CfgRow l="Right:" t="M3(3) H" w="w-[74px]" />
        <div className="flex h-[23px] items-center pl-[7px]"><Check /><span className="ml-[6px] w-[187px]">Offset: Center in channel</span><button className={pill + "h-[22px] w-[54px]"}><span><M t="_Update" /></span></button></div>
      </Group>
    </div>
    <div className="mt-[8px] flex flex-1 items-start gap-[47px] border-t border-white pt-[7px] pl-[46px]">
      <button className="h-[23px] w-[63px] rounded-[9px] border border-[#8c0000] bg-linear-to-b from-[#d80000] to-[#960000] font-bold text-white shadow-[0_1px_0_#777]"><M t="_OK" /></button>
      {["_Apply", "_Defaults", "_Cancel", "_Help"].map((t) => <button key={t} className={pill + "h-[23px] w-[63px]"}><span><M t={t} /></span></button>)}
    </div>
  </div>
);

/* ---------- desktop ---------- */
const Menu = ["_File", "_View", "_Edit", "Partitio_n", "Floorpl_an", "Po_wer", "_Place", "EC_O", "_Clock", "_Route", "_Timing", "Verif_y", "PVS", "Too_ls", "W_indows", "F_lows", "_Help"];
const Task = ({ t, ic, dim, on }) => (
  <div className={"flex h-[31px] w-[263px] shrink-0 items-center rounded-[3px] border pl-[7px] text-[13.5px] tracking-[-0.5px] whitespace-nowrap " + (on ? "border-[#a4a4a4] bg-[#cbcbcb] " : "border-[#b4b4b4] bg-[#ededed] ") + (dim ? "text-[#8c8c8c]" : "text-[#2e3436]")}>
    <svg viewBox="0 0 24 24" className={"mr-[5px] h-[22px] w-[22px] shrink-0 " + (dim ? "opacity-65" : "")}>{ic}</svg>{t}
  </div>
);
const tIc = {
  cab: <g><rect x="4" y="1" width="16" height="22" rx="2" fill="#85add8" stroke="#4f7cb0" /><rect x="6.500" y="4" width="11" height="7" fill="#dce6f2" stroke="#5a80b0" /><rect x="6.500" y="13" width="11" height="7" fill="#dce6f2" stroke="#5a80b0" /><path d="M10 8h4M10 17h4" stroke="#333" strokeWidth="1.600" /></g>,
  term: <g><rect x="1.500" y="2.500" width="21" height="19" fill="#2d3234" stroke="#999" strokeWidth="1.500" /><path d="M4.500 6L7 8L4.500 10M8 11H12" fill="none" stroke="#ddd" /></g>,
  box: <rect x="2.500" y="2.500" width="19" height="19" fill="#fff" fillOpacity=".5" stroke="#27357c" strokeWidth="3" />,
  ff: <g><circle cx="12" cy="12.500" r="10" fill="#ff8a1e" /><circle cx="12.500" cy="11" r="6" fill="#5b5fd8" /><path d="M3 6Q8 5 10 9Q14 10 11 13Q12 17 17 15Q12 21 6 17Q2 12 3 6Z" fill="#ff5b2a" /><path d="M15 2Q23 7 21 15Q18 20 16 18Q20 11 15 2Z" fill="#ffc928" /></g>,
  edit: <g><rect x="3.500" y="3.500" width="15" height="19" fill="#f7f5ee" stroke="#8a8a80" /><path d="M6 8H15M6 11H15M6 14H15M6 17H12" stroke="#999" /><path d="M10 17L19 3L22 5L13 18L9.500 20Z" fill="#f0a060" stroke="#a45c24" /></g>,
};

export default function App() {
  return (
    <div className="relative flex h-[1200px] w-[1920px] flex-col overflow-hidden bg-[#efefef] font-['Open_Sans','Noto_Sans',sans-serif] text-[12.5px] leading-[17px] tracking-[-0.28px] text-[#1a1a1a]">
      <header className="flex h-[28px] shrink-0 items-center border-b border-[#666] bg-linear-to-b from-[#ededed] to-[#dcdcdc] pb-[2px] text-[15px] tracking-[-0.55px] text-[#2e3436]">
        <svg viewBox="0 0 16 16" className="ml-[8px] h-[15px] w-[15px]"><g><path d="M8 8L8 0L12 3L11 6Z" fill="#efa724" /><path d="M8 8L16 8L13 12L10 11Z" fill="#262577" /><path d="M8 8L8 16L4 13L5 10Z" fill="#9ccd2a" /><path d="M8 8L0 8L3 4L6 5Z" fill="#932279" /><path d="M2 2h5v5z" fill="#9ccd2a" /><path d="M14 2v5l-5 0z" fill="#932279" /><path d="M14 14h-5v-5z" fill="#efa724" /><path d="M2 14v-5h5z" fill="#5c4a9c" /></g></svg>
        <span className="ml-[8px] w-[98px]">Applications</span><span className="w-[66px]">Places</span>
        <span>Innovus(TM) Implementation System 20.14 - /home/nitrkl05/Desktop/Lock/PD/lock_pd.dat - lock — vlsilab5.nitrkl.ac...</span>
        <span className="ml-auto tracking-[-0.4px]">Fri 18:57</span><i className="ml-[4px] h-[8px] w-[8px] rounded-full bg-[#2e3436]" />
        <svg viewBox="0 0 72 16" className="mr-[15px] ml-[25px] h-[16px] w-[72px]">
          <g fill="#2e3436"><rect x="5" y="1" width="5" height="5" /><rect x="0" y="11" width="5" height="5" /><rect x="10" y="11" width="5" height="5" /><path d="M7.500 6V9M2.500 11V8.500H12.500V11" fill="none" stroke="#2e3436" /><path d="M28 6H31L35 2V14L31 10.500H28Z" /></g>
          <path d="M37 5.500Q39 8 37 11" fill="none" stroke="#2e3436" strokeWidth="1.500" /><path d="M39 3.500Q42 8 39 13M41.500 2Q46 8 41.500 14.500" fill="none" stroke="#aaa" strokeWidth="1.300" />
          <path d="M61 3.500A6 6 0 1 0 67 3.500M64 1V8" fill="none" stroke="#2e3436" strokeWidth="2" />
        </svg>
      </header>
      <div className="flex h-[37px] shrink-0 items-center border-b border-[#bdbdb8] bg-[#e8e8e6] pb-[2px] text-[15px] font-semibold tracking-[-0.46px] text-[#8b8e8f]">
        <span className="w-[98px]" /><span className="flex-1 text-center">Innovus(TM) Implementation System 20.14 - /home/nitrkl05/Desktop/Lock/PD/lock_pd.dat - lock — vlsilab5.nitrkl.ac.in</span>
        <svg viewBox="0 0 80 12" className="mr-[10px] ml-[8px] h-[12px] w-[80px]"><g fill="none" stroke="#8b8e8f" strokeWidth="2"><path d="M1 9H9M36 4H40V8H36ZM69 2L76 9M76 2L69 9" /></g></svg>
      </div>
      <nav className="flex h-[27px] shrink-0 items-center gap-[12.5px] bg-[#f3f3f3] pl-[9px]">
        {Menu.map((m) => <span key={m}><M t={m} /></span>)}
        <div className="ml-auto flex h-[22px] w-[110px] items-center rounded-[2px] border border-[#ccc] border-t-[#888] bg-white">
          <svg viewBox="0 0 14 14" className="h-[14px] w-[14px]"><circle cx="5.500" cy="5.500" r="4" fill="#f4f4ff" stroke="#c48a72" strokeWidth="1.400" /><path d="M8.500 8.500L12.500 12.500" stroke="#5c6c98" strokeWidth="2.400" /></svg>
          <span className="ml-[8px] text-[#999]">online help</span>
        </div>
        <span className="mr-[7px] -ml-[7px] font-['Open_Sans'] text-[15px] font-bold tracking-[1.4px] text-[#222]">c<span className="relative">a<i className="absolute top-[4px] left-[1px] h-[2px] w-[6px] bg-[#e04040]" /></span>dence</span>
      </nav>
      <div className="h-[4px] shrink-0 bg-[#d20000]" />
      <div className="flex h-[27px] shrink-0 items-end gap-[2px] bg-[#f0f0f0]">
        <div className="flex h-[23px] w-[57px] items-center justify-center border-t border-r border-[#b0b0b0] bg-[#f5f5f5] pl-[2px]"><span><M t="_Layout" /></span></div>
        <div className="mb-px flex h-[22px] w-[21px] items-center justify-center rounded-[4px] border border-[#b4b4b4] bg-linear-to-b from-[#f4f4f4] to-[#c4c4c4]">
          <svg viewBox="0 0 14 14" className="h-[14px] w-[14px]"><circle cx="7" cy="7" r="7" fill="#c04c50" /><path d="M7 3.500V10.500M3.500 7H10.500" stroke="#fff" strokeWidth="2" /></svg>
        </div>
      </div>
      <div className="flex min-h-0 flex-1 flex-col border-r-2 border-black bg-[#efefef]">
        <div className="flex h-[32px] shrink-0 gap-[2px] border-t-2 border-white pl-[2px]">
          <div className={seg + " w-[131px] pl-[3px]"}><Grip /><Tools list={["folder", "save", "gear", "check"]} /></div>
          <div className={seg + " w-[215px] pl-[3px]"}><Grip /><Tools list={["undo", "redo", "|", "brush", "v", "brushx", "v", "brushxx", "cursorx"]} /></div>
          <div className={seg + " w-[349px] pl-[3px]"}><Grip /><Tools list={["zoomfit", "v", "zoomin", "zoomout", "zoomall", "zoomprev", "v", "zoomnext", "swirl", "swirldb", "v", "|", "down", "up"]} /></div>
          <div className={seg + " w-[223px] pl-[2px]"}><Grip /><Tools list={["layout", "hier", "tri", "info", "xxcur", "rulerx", "warn"]} /></div>
          <div className={seg + " flex-1 pl-[3px]"}><Grip /><Tools list={["note", "pad", "pct"]} /></div>
        </div>
        <div className="flex h-[30px] shrink-0 pl-[2px]">
          <div className={seg + " flex-1 pl-[3px]"}>
            <Grip />
            <div className="ml-px flex h-[28px] w-[30px] items-center justify-center rounded-[3px] border border-black bg-linear-to-r from-[#aaa] to-[#e4e4e4]"><svg viewBox="0 0 28 26" className="h-[26px] w-[28px] overflow-visible"><rect x="2.500" y="3.500" width="9" height="9" fill="none" stroke="#000" strokeWidth="2" /><Cur x={12} y={11} s={.95} /></svg></div>
            <div className="flex h-[28px] w-[9px] items-center rounded-[3px] border border-black"><Arr c="w-[7px]" /></div>
            <Tools list={["snow", "v", "copy", "ruler", "v", "vm", "pct2", "cutsel", "g1", "g2", "g3", "g4", "g5", "g6", "path", "selcur", "bound", "v", "cut", "v", "resize", "v", "redcur", "pathcur", "multicur"]} />
            <div className="ml-auto flex items-center gap-[3px]">
              <Sep />
              <div className="flex h-[27px] w-[28px] items-center justify-center rounded-[3px] border border-black bg-[#bbb]"><Icon n="persp" /></div>
              <div className="-ml-px flex"><Tools list={["blob", "cells"]} /></div><Sep />
            </div>
            <div className="mr-px flex items-center pl-px"><Icon n="glasses" c="mr-[5px] h-[24px] w-[24px]" /><Arr c="w-[8px]" /></div>
          </div>
        </div>
        <div className="flex h-[924px] shrink-0">
          <aside className="ml-[2px] flex w-[41px] shrink-0 flex-col rounded-br-[4px] border-b border-[#888] bg-linear-to-r from-[#e6e6e6] to-[#b8b8b8] pl-[3px]">
            <div className="mt-[5px] flex h-[6px] w-[34px] shrink-0 flex-col justify-between"><i className="h-px bg-[#8a8a8a]" /><i className="h-px bg-[#8a8a8a]" /><i className="h-px bg-[#8a8a8a]" /></div>
            <div className="flex h-[27px] items-center"><div className="flex w-[27px] flex-col items-start"><span className="-mt-px h-[16px] font-['Noto_Sans'] text-[13.5px] leading-[15px] font-bold text-black">Net</span><svg viewBox="0 0 21 5" className="ml-px h-[5px] w-[21px]"><path d="M1 2.500H20M4 .5L1 2.500L4 4.500M17 .5L20 2.500L17 4.500" fill="none" stroke="#b83030" /></svg></div><Arr c="w-[12px]" /></div>
            {["layers", "squeeze"].map((n, i) => <div key={n} className="flex h-[30px] items-center pb-[2px]"><span className="w-[27px]"><Icon n={n} c="h-[20px] w-[22px]" /></span>{i ? <i className="ml-[2px] h-px w-[8px] bg-[#777]" /> : <Arr c="w-[12px]" />}</div>)}
            {["compass", "bars", "split", "merge", "cross", "barx"].map((n) => <div key={n} className="flex h-[30px] w-[34px] items-center justify-center"><Icon n={n} c="h-[22px] w-[22px]" /></div>)}
            <div className="flex h-[30px] items-center pb-[3px]"><span className="w-[27px] text-[11.5px] font-semibold text-[#1c2c1c]">Snap</span><Arr c="w-[12px]" /></div>
            {["rot", "shrink"].map((n) => <div key={n} className="flex h-[30px] w-[34px] items-center justify-center"><Icon n={n} c="h-[22px] w-[22px]" /></div>)}
            <div className="flex h-[30px] items-center"><span className="w-[27px] pl-px"><Icon n="line" c="h-[22px] w-[22px]" /></span><Arr c="w-[12px]" /></div>
            <span className="ml-[2px] h-[30px] font-['Noto_Sans'] text-[28px] leading-[29px] font-bold text-[#333]">A</span>
          </aside>
          <Layout />
          <div className="w-[6px] shrink-0 bg-[#d0d0d8]" />
          <RightPanel />
        </div>
        <div className="flex h-[22px] shrink-0 items-center bg-linear-to-b from-[#e4e4e4] to-[#b8b8b8] pl-[5px]">
          <Grip />
          <button className={pill + "ml-px h-[21px] w-[99px]"}><span className="ml-[3px] w-[54px] text-center">select</span><svg viewBox="0 0 5 8" className="ml-[17px] h-[8px] w-[5px]"><path d="M0 0L5 4L0 8Z" fill="#c40000" /></svg></button>
          <button className={pill + "h-[21px] w-[101px]"}><span className="w-[54px] text-center">Instance</span><svg viewBox="0 0 5 8" className="ml-[15px] h-[8px] w-[5px]"><path d="M0 0L5 4L0 8Z" fill="#c40000" /></svg></button>
          <Field t={<span className="text-[#999]">Enter Instance name.</span>} c="h-[22px] w-[1319px]" />
          <span className="w-[2px]" /><Check /><span className="ml-[5px] w-[112px]">Append</span><span className="w-[46px]">coords</span>
          <Field t="0, 0" c="h-[22px] w-[75px]" /><span className="ml-[7px] w-[42px]">radius</span><Field t="150" c="h-[22px] w-[41px]" />
          <button className={pill + "ml-px h-[21px] w-[45px]"}>Goto</button>
        </div>
        <div className="flex h-[29px] shrink-0 items-start gap-[5px] bg-[#f0f0f0] pt-[3px] pl-[4px]">
          <div className="flex h-[24px] w-[22px] items-center justify-center border border-r-2 border-b-2 border-[#333] bg-white font-bold">Q</div>
          <div className="-ml-px flex h-[24px] w-[24px] items-center justify-center border border-r-2 border-b-2 border-[#333] bg-[#eee]">
            <svg viewBox="0 0 20 20" className="h-[19px] w-[19px]"><rect x="2" y="1" width="4" height="4" fill="#f0a0a0" stroke="#c06060" /><rect x="2" y="8" width="4" height="4" fill="#6888c8" stroke="#4060a0" /><rect x="2" y="14.500" width="4" height="4" fill="#f0c090" stroke="#c08040" /><circle cx="13" cy="10" r="5.500" fill="#dfe6ee" stroke="#556" strokeWidth="1.500" /><path d="M13 6.500V10H16M12 16H18L15 19Z" fill="#000" stroke="#223" /></svg>
          </div>
          <div className="-ml-px flex h-[25px] flex-1 items-center border border-[#555] border-b-white bg-white pt-px pr-[10px] pl-[5px]">
            <span>Click to select single object. Shift+Click to de/select multiple objects.</span>
            <span className="ml-auto font-bold tracking-[-0.36px] text-[#5a5a5a]">44.08800, 15.73700 <span className="text-[#5c88d0]">Sel: 0</span> <span className="text-[#40bcc8]">In Memory</span></span>
          </div>
        </div>
      </div>
      <div className="h-[2px] shrink-0 bg-black" />
      <footer className="flex h-[38px] shrink-0 items-center gap-[4.5px] border-t border-[#888] bg-linear-to-b from-[#e9e9e9] to-[#dadada] pl-[5px]">
        <div className="flex h-[27px] w-[30px] items-center justify-center rounded-[3px] border border-[#b4b4b4] bg-[#ededed]">
          <svg viewBox="0 0 14 14" className="h-[14px] w-[14px]"><g fill="none" stroke="#2e3436" strokeWidth="2"><rect x="6.500" y="1.500" width="6" height="6" /><path d="M4 6.500H1.500V12.500H7.500V10" /></g></svg>
        </div>
        <Task t="[PD]" ic={tIc.cab} dim /><Task t="nitrkl05@vlsilab5:PD" ic={tIc.term} /><Task t="Innovus(TM) Implementation Syste..." ic={tIc.box} /><Task t="[Chat - Mozilla Firefox]" ic={tIc.ff} dim /><Task t="[lock_netlist_dft.v (~/Desktop/Lock..." ic={tIc.edit} dim /><Task t="Add Rings — vlsilab5.nitrkl.ac.in" ic={tIc.box} on />
        <div className="ml-[37px] flex gap-[3px]">
          <div className="flex h-[27px] w-[54px] items-end justify-end rounded-l-[3px] border border-[#b4b4b4] bg-[#f2f2f2] pr-[3px] pb-[4px]"><i className="h-[10px] w-[16px] border-2 border-[#666] bg-white" /></div>
          <div className="h-[27px] w-[54px] border border-[#bbb] bg-[#dcdcdc]" /><div className="h-[27px] w-[54px] border border-[#bbb] bg-[#dcdcdc]" /><div className="h-[27px] w-[54px] rounded-r-[3px] border border-[#bbb] bg-[#dcdcdc]" />
        </div>
      </footer>
      <Dialog />
    </div>
  );
}
